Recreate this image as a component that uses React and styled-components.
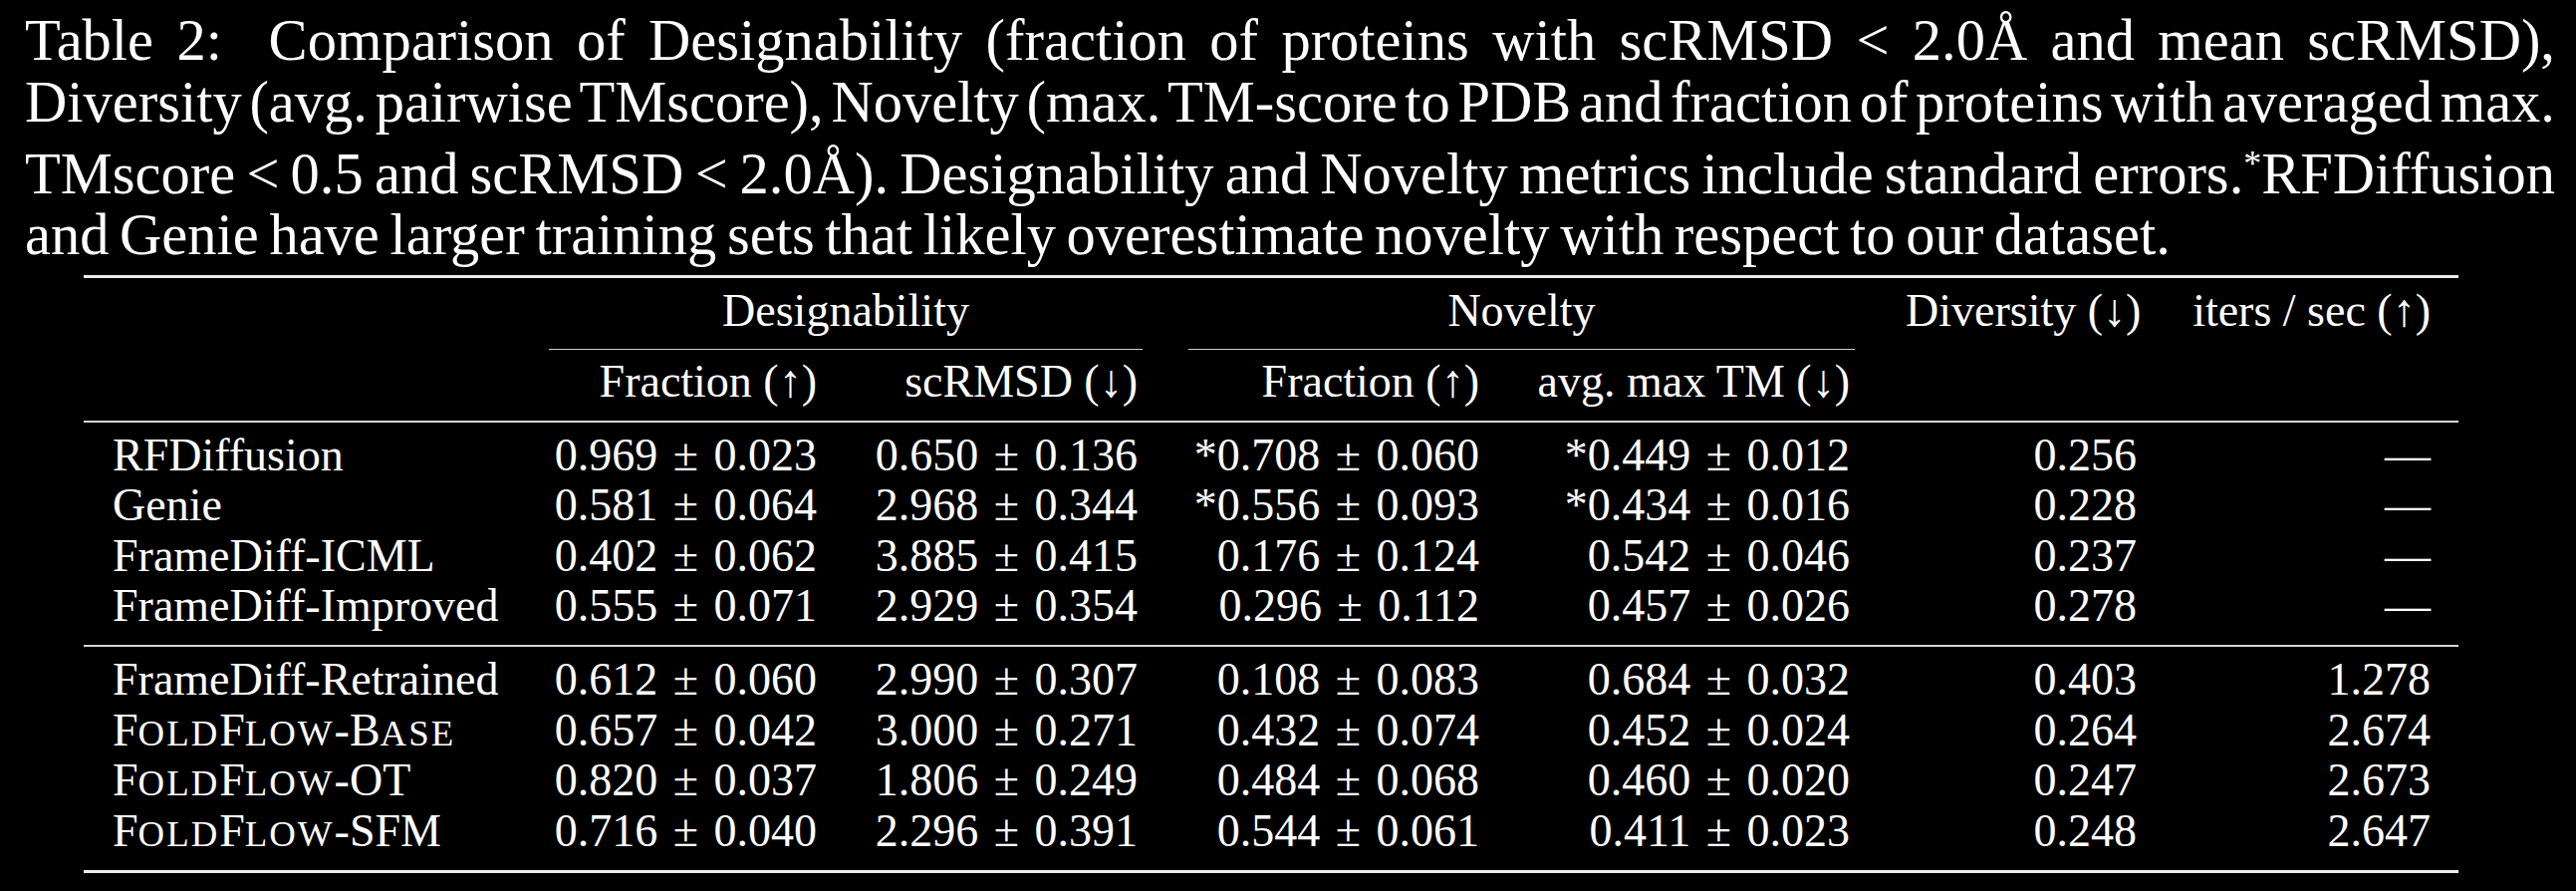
import React from 'react';
import styled, { createGlobalStyle } from 'styled-components';

const GlobalStyle = createGlobalStyle`
    html, body {
        margin: 0;
        padding: 0;
        background: #000000;
    }
    body {
        font-family: "Liberation Serif", "Times New Roman", serif;
        color: #FFFFFF;
    }
`

const COLS = '444px 320px 322px 343px 372px 288px 295px';

const rowsTop = [
    ['RFDiffusion', '0.969 ± 0.023', '0.650 ± 0.136', '*0.708 ± 0.060', '*0.449 ± 0.012', '0.256', '—'],
    ['Genie', '0.581 ± 0.064', '2.968 ± 0.344', '*0.556 ± 0.093', '*0.434 ± 0.016', '0.228', '—'],
    ['FrameDiff-ICML', '0.402 ± 0.062', '3.885 ± 0.415', '0.176 ± 0.124', '0.542 ± 0.046', '0.237', '—'],
    ['FrameDiff-Improved', '0.555 ± 0.071', '2.929 ± 0.354', '0.296 ± 0.112', '0.457 ± 0.026', '0.278', '—'],
];

const rowsBottom = [
    ['FrameDiff-Retrained', '0.612 ± 0.060', '2.990 ± 0.307', '0.108 ± 0.083', '0.684 ± 0.032', '0.403', '1.278'],
    ['FoldFlow-Base', '0.657 ± 0.042', '3.000 ± 0.271', '0.432 ± 0.074', '0.452 ± 0.024', '0.264', '2.674', true],
    ['FoldFlow-OT', '0.820 ± 0.037', '1.806 ± 0.249', '0.484 ± 0.068', '0.460 ± 0.020', '0.247', '2.673', true],
    ['FoldFlow-SFM', '0.716 ± 0.040', '2.296 ± 0.391', '0.544 ± 0.061', '0.411 ± 0.023', '0.248', '2.647', true],
];

// latex \textsc: lowercase runs become smaller capitals
const SmallCaps = ({ text }) => (
    <span>
        {text.split(/([a-z]+)/).map((part, i) =>
            i % 2 === 1 ? <Lower key={i}>{part.toUpperCase()}</Lower> : part
        )}
    </span>
)

const DataGroup = ({ rows }) => (
    <Group>
        {rows.map(([label, ...rest]) => {
            const smallCaps = rest.length > 6;
            const values = rest.slice(0, 6);
            return (
                <React.Fragment key={label}>
                    <Cell $left>{smallCaps ? <SmallCaps text={label} /> : label}</Cell>
                    {values.map((v, i) => <Cell key={i} $value>{v}</Cell>)}
                </React.Fragment>
            )
        })}
    </Group>
)

export default function App() {
    return (
        <Page>
            <GlobalStyle />
            <Caption>
                <CaptionLine>Table 2:&nbsp; Comparison of Designability (fraction of proteins with scRMSD &lt; 2.0Å and mean scRMSD),</CaptionLine>
                <CaptionLine $tight>Diversity (avg. pairwise TMscore), Novelty (max. TM-score to PDB and fraction of proteins with averaged max.</CaptionLine>
                <CaptionLine $gap>TMscore &lt; 0.5 and scRMSD{'\u2009<\u2009'}2.0Å). Designability and Novelty metrics include standard errors.<Sup>*</Sup>RFDiffusion</CaptionLine>
                <CaptionLine $last>and Genie have larger training sets that likely overestimate novelty with respect to our dataset.</CaptionLine>
            </Caption>
            <Table>
                <Rule $weight={3} />
                <HeaderRow $top>
                    <Cell $left />
                    <GroupTitle $span="2 / 4">Designability</GroupTitle>
                    <GroupTitle $span="4 / 6">Novelty</GroupTitle>
                    <Cell>Diversity (↓)</Cell>
                    <Cell>iters / sec (↑)</Cell>
                </HeaderRow>
                <RuleRow>
                    <CMidRule $span="2 / 4" />
                    <CMidRule $span="4 / 6" />
                </RuleRow>
                <HeaderRow>
                    <Cell $left />
                    <Cell>Fraction (↑)</Cell>
                    <Cell>scRMSD (↓)</Cell>
                    <Cell>Fraction (↑)</Cell>
                    <Cell>avg. max TM (↓)</Cell>
                    <Cell />
                    <Cell />
                </HeaderRow>
                <Rule $weight={2} />
                <DataGroup rows={rowsTop} />
                <Rule $weight={2} />
                <DataGroup rows={rowsBottom} />
                <Rule $weight={3} />
            </Table>
        </Page>
    )
}

const Page = styled.div`
    width: 2586px;
    min-height: 894px;
    padding-top: 10px;
    box-sizing: border-box;
    background: #000000;
`

const Caption = styled.div`
    width: 2540px;
    margin-left: 25px;
    font-size: 58.5px;
    line-height: 61.5px;
`

const CaptionLine = styled.div`
    text-align: ${({ $last }) => $last ? 'left' : 'justify'};
    text-align-last: ${({ $last }) => $last ? 'left' : 'justify'};
    word-spacing: ${({ $tight }) => $tight ? '-10px' : '-4px'};
    margin-top: ${({ $gap }) => $gap ? '10.5px' : '0'};
`

const Sup = styled.sup`
    font-size: 36px;
    line-height: 0;
    vertical-align: 18px;
`

const Table = styled.div`
    width: 2384px;
    margin-left: 84px;
    margin-top: 9px;
    font-size: 46px;
    line-height: 50.4px;
`

const Rule = styled.div`
    height: ${({ $weight }) => $weight}px;
    background: ${({ $weight }) => $weight > 2 ? '#ececec' : '#d6d6d6'};
`

const HeaderRow = styled.div`
    display: grid;
    grid-template-columns: ${COLS};
    padding: ${({ $top }) => $top ? '8px 0 0' : '7px 0 13px'};
`

const RuleRow = styled.div`
    display: grid;
    grid-template-columns: ${COLS};
    padding-top: 13px;
`

const Group = styled.div`
    display: grid;
    grid-template-columns: ${COLS};
    padding: 8px 0 14px;
`

const Cell = styled.div`
    padding: ${({ $left }) => $left ? '0 28px 0 29px' : '0 28px'};
    text-align: ${({ $left }) => $left ? 'left' : 'right'};
    word-spacing: ${({ $value }) => $value ? '4px' : '0'};
    white-space: nowrap;
    height: 50.4px;
`

const GroupTitle = styled.div`
    grid-column: ${({ $span }) => $span};
    text-align: center;
    white-space: nowrap;
`

const CMidRule = styled.div`
    grid-column: ${({ $span }) => $span};
    height: 1.5px;
    margin: 0 23px;
    background: #d0d0d0;
`

const Lower = styled.span`
    font-size: 0.8em;
    line-height: 0;
    letter-spacing: 2px;
`
